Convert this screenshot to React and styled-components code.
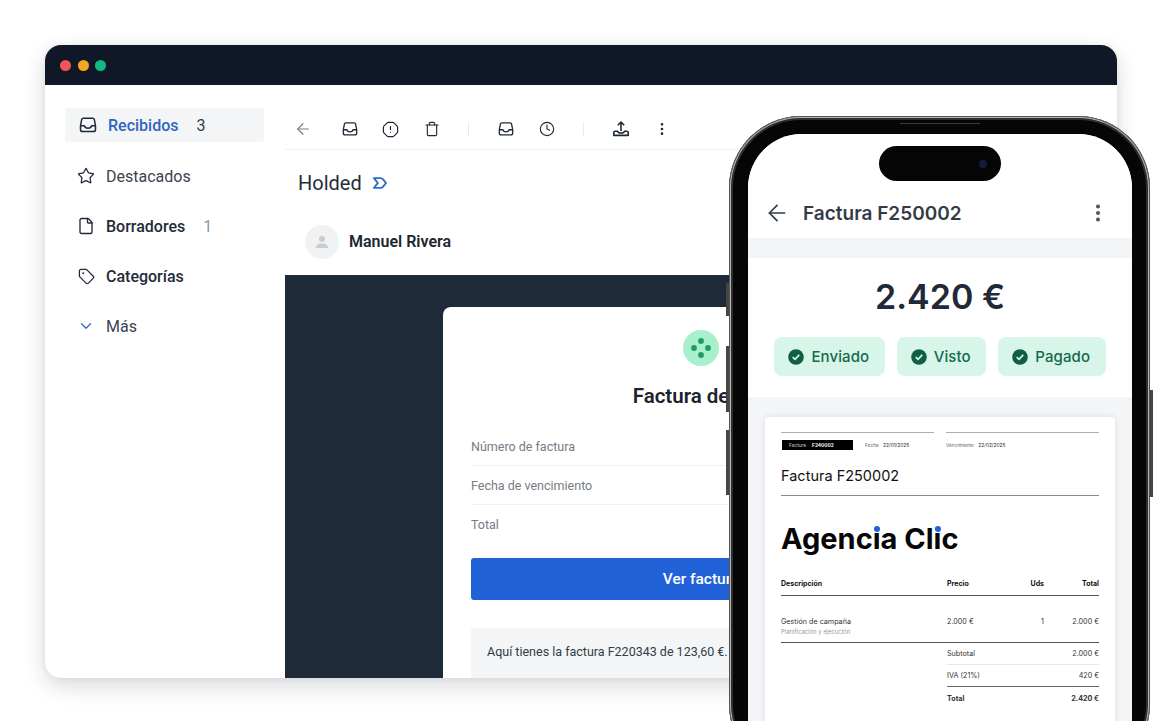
import React from "react";
import styled, { createGlobalStyle } from "styled-components";
import {
  ArrowLeft,
  ChevronDown,
  Clock,
  EllipsisVertical,
  File,
  OctagonAlert,
  Star,
  Tag,
  Trash,
} from "lucide-react";

const GlobalStyle = createGlobalStyle`
  html, body {
    margin: 0;
    padding: 0;
    background: #fff;
  }
  * {
    box-sizing: border-box;
  }
`;

const InboxIcon = ({ size = 18 }) => (
  <svg width={size} height={size} viewBox="0 0 18 18" fill="none" stroke="#1f2937" strokeWidth="1.5" strokeLinejoin="round">
    <path d="M4.2 2.2h9.6c.8 0 1.3.5 1.5 1.2l1.2 6.4v3.6c0 1.3-.9 2.2-2.2 2.2H3.7c-1.3 0-2.2-.9-2.2-2.2V9.8l1.2-6.4c.2-.7.7-1.2 1.5-1.2z" />
    <path d="M1.6 9.8h3.9c.3 1.5 1.6 2.4 3.5 2.4s3.2-.9 3.5-2.4h3.9" />
  </svg>
);

const UploadIcon = () => (
  <svg width="18" height="18" viewBox="0 0 18 18" fill="none" stroke="#1f2937" strokeWidth="1.6" strokeLinejoin="round">
    <path d="M9 11V2.2M5.8 5.2 9 2l3.2 3.2" />
    <path d="M1.8 12.6c0-.8.5-1.4 1.3-1.4h2.4c.3 1.2 1.7 1.8 3.5 1.8s3.2-.6 3.5-1.8h2.4c.8 0 1.3.6 1.3 1.4v2.8H1.8z" />
  </svg>
);

const HoldedMark = () => (
  <svg width="14" height="12" viewBox="0 0 14 12" fill="none" stroke="#2f6cc4" strokeWidth="1.9" strokeLinejoin="round">
    <path d="M1 1.1h6.4c1.2 0 2 .4 2.7 1.2L13 6l-2.9 3.7c-.7.8-1.5 1.2-2.7 1.2H1L4.8 6z" />
  </svg>
);

const CheckBadge = () => (
  <svg width="16" height="16" viewBox="0 0 16 16">
    <circle cx="8" cy="8" r="7.8" fill="#0f5f47" />
    <path d="M4.7 8.2 7 10.4l4.3-4.6" fill="none" stroke="#d7f5e8" strokeWidth="1.7" />
  </svg>
);

const BrandDots = () => (
  <svg width="20" height="20" viewBox="0 0 20 20" fill="#1f9b6b">
    <circle cx="10" cy="3" r="2.9" />
    <circle cx="3" cy="10" r="2.9" />
    <circle cx="17" cy="10" r="2.9" />
    <circle cx="10" cy="17" r="2.9" />
  </svg>
);

const App = () => (
  <Page>
    <GlobalStyle />
    <Window>
      <TitleBar>
        <Light $color="#f2545b" />
        <Light $color="#f5a623" />
        <Light $color="#12b981" />
      </TitleBar>
      <WindowBody>
        <Sidebar>
          <NavItem $active>
            <NavIcon><InboxIcon /></NavIcon>
            <NavLabel $active>Recibidos</NavLabel>
            <NavCount $dark>3</NavCount>
          </NavItem>
          <NavItem>
            <NavIcon><Star size={20} strokeWidth={1.7} /></NavIcon>
            <NavLabel>Destacados</NavLabel>
          </NavItem>
          <NavItem>
            <NavIcon><File size={18} strokeWidth={1.8} /></NavIcon>
            <NavLabel $strong>Borradores</NavLabel>
            <NavCount>1</NavCount>
          </NavItem>
          <NavItem>
            <NavIcon><Tag size={17} strokeWidth={1.8} /></NavIcon>
            <NavLabel $strong>Categorías</NavLabel>
          </NavItem>
          <NavItem>
            <NavIcon $blue><ChevronDown size={22} strokeWidth={1.7} /></NavIcon>
            <NavLabel>Más</NavLabel>
          </NavItem>
        </Sidebar>
        <Mail>
          <Toolbar>
            <ToolButton $muted><ArrowLeft size={18} strokeWidth={1.6} /></ToolButton>
            <ToolGroup>
              <ToolButton><InboxIcon size={16} /></ToolButton>
              <ToolButton><OctagonAlert size={17} strokeWidth={1.7} /></ToolButton>
              <ToolButton><Trash size={16} strokeWidth={1.7} /></ToolButton>
            </ToolGroup>
            <ToolSeparator />
            <ToolGroup>
              <ToolButton><InboxIcon size={16} /></ToolButton>
              <ToolButton><Clock size={16} strokeWidth={1.7} /></ToolButton>
            </ToolGroup>
            <ToolSeparator />
            <ToolGroup>
              <ToolButton><UploadIcon /></ToolButton>
              <ToolButton><EllipsisVertical size={16} strokeWidth={2} /></ToolButton>
            </ToolGroup>
          </Toolbar>
          <Subject>
            Holded
            <HoldedMark />
          </Subject>
          <Sender>
            <Avatar>
              <svg width="14" height="14" viewBox="0 0 14 14" fill="#c9ccd1">
                <circle cx="7" cy="4" r="3" />
                <path d="M1 13c0-3 2.6-4.4 6-4.4s6 1.4 6 4.4z" />
              </svg>
            </Avatar>
            <SenderName>Manuel Rivera</SenderName>
          </Sender>
          <MailBody>
            <InvoiceCard>
              <BrandCircle><BrandDots /></BrandCircle>
              <CardTitle>Factura de Clic</CardTitle>
              <CardRows>
                <CardRow>Número de factura</CardRow>
                <CardRow>Fecha de vencimiento</CardRow>
                <CardRow $last>Total</CardRow>
              </CardRows>
              <ViewButton>Ver factura</ViewButton>
              <Notice>Aquí tienes la factura F220343 de 123,60 €.</Notice>
            </InvoiceCard>
          </MailBody>
        </Mail>
      </WindowBody>
    </Window>

    <Phone>
      <SideKey $top={167} $height={33} />
      <SideKey $top={230} $height={66} />
      <SideKey $top={314} $height={65} />
      <SideKey $right $top={274} $height={107} />
      <Speaker />
      <Screen>
        <Island><Camera /></Island>
        <PhoneHeader>
          <ArrowLeft size={26} strokeWidth={1.6} />
          <PhoneTitle>Factura F250002</PhoneTitle>
          <EllipsisVertical size={22} strokeWidth={2.4} color="#4b5563" />
        </PhoneHeader>
        <Summary>
          <Amount>2.420 €</Amount>
          <Chips>
            <Chip><CheckBadge />Enviado</Chip>
            <Chip><CheckBadge />Visto</Chip>
            <Chip><CheckBadge />Pagado</Chip>
          </Chips>
        </Summary>
        <DocArea>
          <Doc>
            <DocMeta>
              <MetaCell>
                <MetaTag>Factura <b>F240002</b></MetaTag>
                <MetaText>Fecha <b>22/01/2025</b></MetaText>
              </MetaCell>
              <MetaCell>
                <MetaText>Vencimiento <b>22/02/2025</b></MetaText>
              </MetaCell>
            </DocMeta>
            <DocTitle>Factura F250002</DocTitle>
            <Brand>Agenc<DottedI>i</DottedI>a Cl<DottedI>i</DottedI>c</Brand>
            <TableHead>
              <span>Descripción</span>
              <span>Precio</span>
              <RightCell>Uds</RightCell>
              <RightCell>Total</RightCell>
            </TableHead>
            <TableRow>
              <span>
                Gestión de campaña
                <RowNote>Planificación y ejecución</RowNote>
              </span>
              <span>2.000 €</span>
              <RightCell>1</RightCell>
              <RightCell>2.000 €</RightCell>
            </TableRow>
            <Totals>
              <TotalLine>
                <span>Subtotal</span>
                <span>2.000 €</span>
              </TotalLine>
              <TotalLine $dark>
                <span>IVA (21%)</span>
                <span>420 €</span>
              </TotalLine>
              <TotalLine $bold>
                <span>Total</span>
                <span>2.420 €</span>
              </TotalLine>
            </Totals>
          </Doc>
        </DocArea>
      </Screen>
    </Phone>
  </Page>
);

export default App;

const Page = styled.div`
  position: relative;
  width: 1161px;
  height: 721px;
  padding: 45px 44px 0 45px;
  overflow: hidden;
  background: #fff;
  font-family: Roboto, "Liberation Sans", sans-serif;
  color: #1f2937;
`;

const Window = styled.div`
  display: flex;
  flex-direction: column;
  width: 1072px;
  height: 633px;
  border-radius: 16px;
  overflow: hidden;
  background: #fff;
  box-shadow: 0 8px 22px rgba(17, 24, 39, 0.16), 0 0 6px rgba(17, 24, 39, 0.06);
`;

const TitleBar = styled.div`
  display: flex;
  align-items: center;
  gap: 6.5px;
  flex: 0 0 40px;
  padding: 0 0 0 15px;
  background: #101828;
`;

const Light = styled.span`
  width: 11px;
  height: 11px;
  border-radius: 50%;
  background: ${(p) => p.$color};
`;

const WindowBody = styled.div`
  display: flex;
  flex: 1;
  min-height: 0;
`;

const Sidebar = styled.nav`
  display: flex;
  flex-direction: column;
  gap: 16px;
  flex: 0 0 240px;
  padding: 23px 21px 0 20px;
`;

const NavItem = styled.div`
  display: flex;
  align-items: center;
  gap: 11px;
  height: 34px;
  margin-bottom: ${(p) => (p.$active ? "1px" : "0")};
  padding-left: ${(p) => (p.$active ? "14px" : "12px")};
  border-radius: 3px;
  background: ${(p) => (p.$active ? "#f3f5f7" : "transparent")};
`;

const NavIcon = styled.span`
  display: flex;
  justify-content: center;
  width: 18px;
  color: ${(p) => (p.$blue ? "#2f6cc4" : "#1f2937")};
`;

const NavLabel = styled.span`
  font-size: 16px;
  font-weight: ${(p) => (p.$active || p.$strong ? 500 : 400)};
  color: ${(p) => (p.$active ? "#2f66bd" : p.$strong ? "#222b38" : "#3b4350")};
`;

const NavCount = styled.span`
  margin-left: 7px;
  font-size: 16px;
  color: ${(p) => (p.$dark ? "#333b47" : "#909499")};
`;

const Mail = styled.div`
  display: flex;
  flex-direction: column;
  flex: 1;
  min-width: 0;
`;

const Toolbar = styled.div`
  display: flex;
  align-items: center;
  gap: 26.5px;
  height: 65px;
  padding: 24px 0 0 8px;
  border-bottom: 1px solid #f1f2f4;
`;

const ToolGroup = styled.div`
  display: flex;
  gap: 21px;
`;

const ToolButton = styled.span`
  display: flex;
  align-items: center;
  justify-content: center;
  width: 20px;
  color: ${(p) => (p.$muted ? "#7b828c" : "#1f2937")};
`;

const ToolSeparator = styled.span`
  width: 1px;
  height: 14px;
  background: #e8eaed;
`;

const Subject = styled.h2`
  display: flex;
  align-items: center;
  gap: 11px;
  height: 66px;
  margin: 0;
  padding-left: 13px;
  font-size: 20px;
  font-weight: 400;
  color: #262d38;
`;

const Sender = styled.div`
  display: flex;
  align-items: center;
  gap: 10px;
  height: 59px;
  padding: 0 0 8px 20px;
`;

const Avatar = styled.span`
  display: flex;
  align-items: center;
  justify-content: center;
  width: 34px;
  height: 34px;
  border-radius: 50%;
  background: #f1f2f3;
`;

const SenderName = styled.span`
  font-size: 16px;
  font-weight: 600;
  color: #20262f;
`;

const MailBody = styled.div`
  flex: 1;
  min-height: 0;
  overflow: hidden;
  padding: 32px 0 0 158px;
  background: #1f2a38;
`;

const InvoiceCard = styled.div`
  display: flex;
  flex-direction: column;
  width: 516px;
  height: 420px;
  padding: 23px 28px 0;
  border-radius: 8px 8px 0 0;
  background: #fff;
`;

const BrandCircle = styled.span`
  display: flex;
  align-items: center;
  justify-content: center;
  align-self: center;
  width: 36px;
  height: 36px;
  border-radius: 50%;
  background: #a8f0cc;
`;

const CardTitle = styled.h3`
  margin: 18px 0 0;
  font-size: 20.5px;
  line-height: 24px;
  font-weight: 600;
  text-align: center;
  color: #1c232d;
`;

const CardRows = styled.div`
  margin-top: 19px;
`;

const CardRow = styled.div`
  display: flex;
  align-items: center;
  height: 39px;
  font-size: 12.5px;
  color: #767b84;
  border-bottom: ${(p) => (p.$last ? "none" : "1px solid #eef0f2")};
`;

const ViewButton = styled.div`
  display: flex;
  align-items: center;
  justify-content: center;
  height: 42px;
  margin-top: 14px;
  border-radius: 3px;
  background: #2162d8;
  color: #fff;
  font-size: 15.5px;
  font-weight: 500;
`;

const Notice = styled.div`
  flex: 1;
  margin-top: 28px;
  padding: 16px;
  background: #f3f5f7;
  font-size: 12.5px;
  color: #333a45;
`;

const Phone = styled.div`
  position: absolute;
  left: 729px;
  top: 116px;
  width: 421px;
  height: 660px;
  padding: 18px 18px 0 19px;
  border-radius: 72px;
  background: #060606;
  box-shadow: inset 0 0 0 1px #555, inset 0 0 0 2px #b4b4b0, inset 0 0 0 4px #2e2e2e;
`;

const SideKey = styled.span`
  position: absolute;
  top: ${(p) => p.$top}px;
  ${(p) => (p.$right ? "right: -3px;" : "left: -3px;")}
  width: 3px;
  height: ${(p) => p.$height}px;
  background: #454543;
`;

const Speaker = styled.span`
  position: absolute;
  left: 171px;
  top: 7px;
  width: 80px;
  height: 1px;
  background: #3a3a3a;
`;

const Screen = styled.div`
  position: relative;
  width: 384px;
  height: 640px;
  overflow: hidden;
  border-radius: 54px 54px 0 0;
  background: #f3f5f7;
`;

const Island = styled.div`
  position: absolute;
  left: 131px;
  top: 12px;
  display: flex;
  align-items: center;
  justify-content: flex-end;
  width: 122px;
  height: 35px;
  padding-right: 14px;
  border-radius: 18px;
  background: #050505;
`;

const Camera = styled.span`
  width: 8px;
  height: 8px;
  border-radius: 50%;
  background: #131a3d;
`;

const PhoneHeader = styled.div`
  display: flex;
  align-items: center;
  height: 104px;
  padding: 63px 23px 9px 16px;
  background: #fff;
  color: #333b47;
`;

const PhoneTitle = styled.span`
  flex: 1;
  margin-left: 13px;
  font-family: Inter, "Liberation Sans", sans-serif;
  font-size: 19px;
  font-weight: 600;
  color: #333b47;
`;

const Summary = styled.section`
  display: flex;
  flex-direction: column;
  align-items: center;
  margin-top: 20px;
  height: 139px;
  padding-top: 19px;
  background: #fff;
  font-family: Inter, "Liberation Sans", sans-serif;
`;

const Amount = styled.div`
  font-size: 34px;
  line-height: 40px;
  font-weight: 600;
  color: #1f2937;
`;

const Chips = styled.div`
  display: flex;
  gap: 12px;
  margin-top: 20px;
`;

const Chip = styled.span`
  display: flex;
  align-items: center;
  gap: 7px;
  height: 39px;
  padding: 0 15.5px 0 14px;
  border-radius: 8px;
  background: #d7f5e8;
  font-size: 15px;
  letter-spacing: 0.1px;
  font-weight: 500;
  color: #14694e;
`;

const DocArea = styled.div`
  padding: 20px 17px 0;
`;

const Doc = styled.article`
  height: 340px;
  padding: 15px 16px 0;
  border-radius: 4px 4px 0 0;
  background: #fff;
  box-shadow: 0 0 6px rgba(31, 41, 55, 0.12);
  font-family: Inter, "Liberation Sans", sans-serif;
  color: #111;
`;

const DocMeta = styled.div`
  display: grid;
  grid-template-columns: 153px 153px;
  gap: 12px;
`;

const MetaCell = styled.div`
  display: flex;
  align-items: center;
  height: 26px;
  padding-bottom: 1px;
  border-top: 1px solid #aeaeae;
`;

const MetaTag = styled.span`
  display: flex;
  align-items: center;
  gap: 6px;
  width: 71px;
  height: 10px;
  margin: 0 12px 0 1px;
  padding-left: 7px;
  background: #000;
  color: #cfcfcf;
  font-size: 4.8px;

  b {
    color: #fff;
  }
`;

const MetaText = styled.span`
  font-size: 4.8px;
  color: #666;
  word-spacing: 3px;

  b {
    font-weight: 400;
    color: #222;
  }
`;

const DocTitle = styled.h4`
  height: 29px;
  margin: 9px 0 0;
  border-bottom: 1px solid #8a8a8a;
  font-size: 14.5px;
  line-height: 18px;
  font-weight: 400;
`;

const Brand = styled.div`
  margin-top: 24px;
  font-size: 29px;
  line-height: 38px;
  font-weight: 700;
  color: #060606;
`;

const DottedI = styled.span`
  position: relative;

  &::after {
    content: "";
    position: absolute;
    left: 50%;
    top: 5px;
    width: 6px;
    height: 6px;
    margin-left: -3px;
    border-radius: 50%;
    background: #2162d8;
  }
`;

const tableColumns = "166px 1fr 30px 55px";

const TableHead = styled.div`
  display: grid;
  grid-template-columns: ${tableColumns};
  align-items: center;
  height: 21px;
  margin-top: 17px;
  border-bottom: 1px solid #555;
  padding-bottom: 3px;
  font-size: 7px;
  font-weight: 700;
`;

const TableRow = styled.div`
  display: grid;
  grid-template-columns: ${tableColumns};
  height: 47px;
  padding-top: 21px;
  border-bottom: 1px solid #555;
  font-size: 7.2px;
  line-height: 10px;
  color: #333;
`;

const RowNote = styled.div`
  font-size: 5.9px;
  line-height: 10px;
  color: #999;
`;

const RightCell = styled.span`
  text-align: right;
`;

const Totals = styled.div`
  margin-left: 166px;
`;

const TotalLine = styled.div`
  display: flex;
  align-items: center;
  justify-content: space-between;
  height: 22px;
  font-size: 7.2px;
  color: #333;
  font-weight: ${(p) => (p.$bold ? 700 : 400)};
  border-bottom: ${(p) =>
    p.$bold ? "none" : p.$dark ? "1px solid #666" : "1px solid #e6e6e6"};
`;
